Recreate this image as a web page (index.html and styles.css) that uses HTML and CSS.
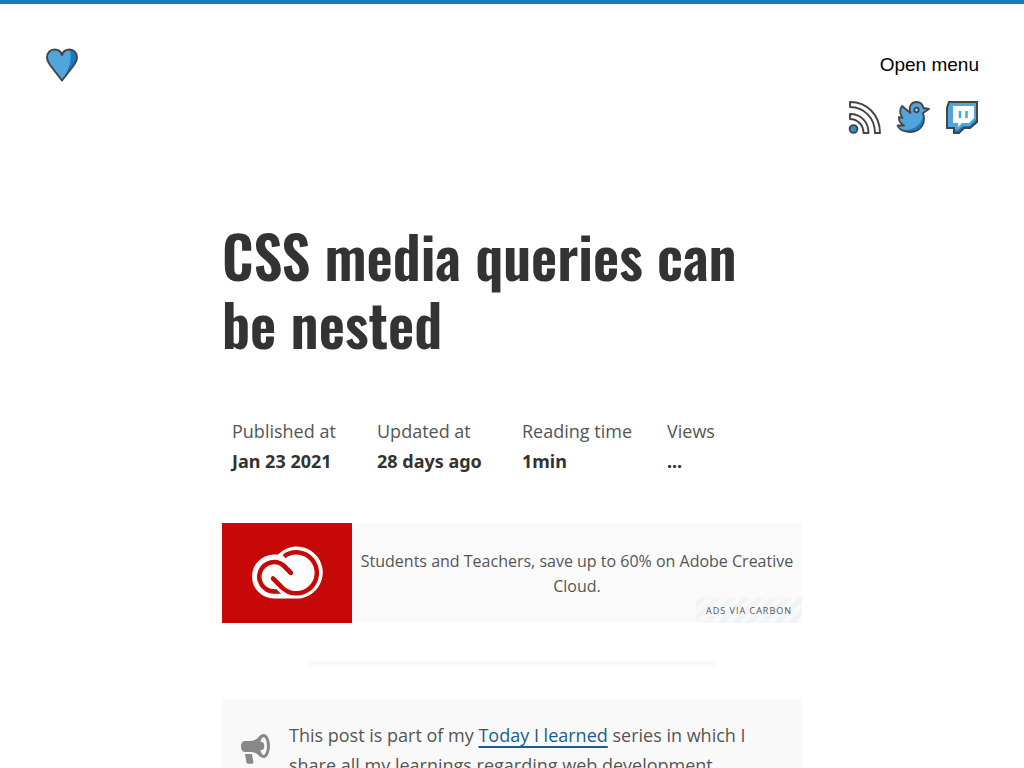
FILE: index.html
```html
<!DOCTYPE html>
<html lang="en">
<head>
<meta charset="utf-8">
<meta name="viewport" content="width=device-width, initial-scale=1">
<title>CSS media queries can be nested</title>
<link rel="stylesheet" href="styles.css">
</head>
<body>
<header class="site-header">
  <a class="home" href="#" aria-label="Home">
    <svg class="icon" viewBox="0 0 34 34" aria-hidden="true">
      <path d="M17 32.500L5 17C2.500 13.500 2 12 2 9.500C2 5 5 1.500 9.500 1.500C13 1.500 16 3.500 17 7C18 3.500 21 1.500 24.500 1.500C29 1.500 32 5 32 9.500C32 12 31.500 13.500 29 17Z" fill="#50a5dc"/>
      <path d="M17 32.500C24 22 28 10 24.500 1.500C29 1.500 32 5 32 9.500C32 12 31.500 13.500 29 17Z" fill="#1b79bd"/>
      <path d="M17 32.500L5 17C2.500 13.500 2 12 2 9.500C2 5 5 1.500 9.500 1.500C13 1.500 16 3.500 17 7C18 3.500 21 1.500 24.500 1.500C29 1.500 32 5 32 9.500C32 12 31.500 13.500 29 17Z" fill="none" stroke="#444" stroke-width="2" stroke-linejoin="round"/>
    </svg>
  </a>
  <div class="header-side">
    <button class="menu-button" type="button">Open menu</button>
    <nav class="social" aria-label="Social">
      <a href="#" aria-label="RSS feed">
        <svg class="icon" viewBox="0 0 34 34" fill="none" stroke="#444" stroke-width="1.900" stroke-linejoin="round" aria-hidden="true">
          <path d="M3 2C20 2 33 15 33 33H28C28 18 17 7 3 7Z"/>
          <path d="M3 14C14 14 21.500 22 21.500 33H16.500C16.500 25 10.500 19 3 19Z"/>
          <circle cx="6.500" cy="29" r="3.900" fill="#2f8dcb"/>
        </svg>
      </a>
      <a href="#" aria-label="Twitter">
        <svg class="icon" viewBox="0 0 34 34" aria-hidden="true">
          <path d="M6 6L14.500 13C12 6 16 2 20.500 2C25 2 26.500 4 27.500 8L33 9L27 13C30 22 26 32 14 32C7 32 3 29 1.500 25.500H8C4 23 2.500 20 3 17L6.500 18C3.500 14 3.500 9 6 6Z" fill="#50a5dc"/>
          <path d="M4 29C14 32 24 27 27 17C28 26 22 32 14 32C9 32 6 31 4 29Z" fill="#1b79bd"/>
          <path d="M6 6L14.500 13C12 6 16 2 20.500 2C25 2 26.500 4 27.500 8L33 9L27 13C30 22 26 32 14 32C7 32 3 29 1.500 25.500H8C4 23 2.500 20 3 17L6.500 18C3.500 14 3.500 9 6 6Z" fill="none" stroke="#444" stroke-width="1.800" stroke-linejoin="round"/>
          <circle cx="20.500" cy="10" r="2.300" fill="#9acbea" stroke="#444" stroke-width="1.700"/>
        </svg>
      </a>
      <a href="#" aria-label="Twitch">
        <svg class="icon" viewBox="0 0 34 34" aria-hidden="true">
          <path d="M4 2H32V22L25 28H19L14 33H9V28H2V8Z" fill="#50a5dc"/>
          <path d="M32 18V22L25 28H19L14 33H9V30H13L18 26H25Z" fill="#1b79bd"/>
          <path d="M8 6H29V18L24 23H17L13 27V23H8Z" fill="#fff"/>
          <path d="M4 2H32V22L25 28H19L14 33H9V28H2V8Z" fill="none" stroke="#444" stroke-width="2"/>
          <path d="M15 11V18M21.500 11V18" stroke="#50a5dc" stroke-width="2.500"/>
        </svg>
      </a>
    </nav>
  </div>
</header>
<main class="article">
  <h1 class="title">CSS media queries can be nested</h1>
  <dl class="meta">
    <div><dt>Published at</dt><dd>Jan 23 2021</dd></div>
    <div><dt>Updated at</dt><dd>28 days ago</dd></div>
    <div><dt>Reading time</dt><dd>1min</dd></div>
    <div><dt>Views</dt><dd>...</dd></div>
  </dl>
  <aside class="ad">
    <a class="ad-logo" href="#" aria-label="Adobe Creative Cloud">
      <svg viewBox="0 0 130 100" aria-hidden="true">
        <rect width="130" height="100" fill="#c60808"/>
        <path d="M52 75.500A22 22 0 0 1 52 31.500H56A26 26 0 1 1 74 75.500Z" fill="#fff"/>
        <g fill="none" stroke="#c60808" stroke-width="4.500">
          <path d="M52 68.500A14.700 14.700 0 1 1 62 43L69 50" stroke-linejoin="round"/>
          <path d="M62 43L69 50" stroke-linecap="round"/>
          <path d="M62 33.500A20.500 20.500 0 1 1 59.500 64L51 55.500"/>
          <path d="M51 55.500L59.500 64" stroke-linecap="round"/>
        </g>
        <path d="M51 66.200H54.500L59 70.800H51Z" fill="#c60808"/>
      </svg>
    </a>
    <a class="ad-text" href="#">Students and Teachers, save up to 60% on Adobe Creative Cloud.</a>
    <a class="ad-via" href="#">ads via Carbon</a>
  </aside>
  <hr class="divider">
  <div class="note">
    <svg class="note-icon" viewBox="0 0 30 30" aria-hidden="true">
      <path d="M5 7H10C15 7 18 4 20 1.500V23C18 20 15 18 10 18H5C2 18 1 15 1 12.500S2 7 5 7Z" fill="#888"/>
      <ellipse cx="23.500" cy="12" rx="5" ry="10.500" fill="#f9f9f9" stroke="#888" stroke-width="3"/>
      <path d="M17 8H22C25 8 25 16 22 16H17Z" fill="#888"/>
      <path d="M5 20H12L13.500 29C13.500 30 7 30 6.500 29Z" fill="#888"/>
    </svg>
    <p class="note-text">This post is part of my <a href="#">Today I learned</a> series in which I share all my learnings regarding web development.</p>
  </div>
</main>
</body>
</html>
```
FILE: styles.css
```css
* {
  box-sizing: border-box;
}

html {
  height: 100%;
  overflow: hidden;
}

body {
  height: 100%;
  margin: 0;
  overflow: hidden;
  border-top: 4px solid #1b79bd;
  background: #fff;
  color: #555;
  font-family: "Segoe UI", "Open Sans", "Noto Sans", sans-serif;
  font-size: 18px;
  line-height: 30px;
}

.site-header {
  display: flex;
  justify-content: space-between;
  align-items: flex-start;
  padding: 44px 45px 0;
}

.icon {
  display: block;
  width: 34px;
  height: 34px;
}

.header-side {
  display: flex;
  flex-direction: column;
  align-items: flex-end;
  gap: 18px;
}

.menu-button {
  padding: 0;
  border: 0;
  background: none;
  color: #000;
  font-family: "Liberation Sans", Arial, sans-serif;
  font-size: 19px;
  line-height: 34px;
}

.social {
  display: flex;
  gap: 15px;
}

.article {
  max-width: 580px;
  margin: 87px auto 0;
}

.title {
  margin: 0;
  color: #333;
  font-family: Oswald, "Liberation Sans Narrow", "Roboto Condensed", sans-serif;
  font-size: 57px;
  font-weight: 600;
  line-height: 68px;
}

.meta {
  display: grid;
  grid-template-columns: repeat(4, 1fr);
  margin: 59px 0 0;
  padding: 0;
}

.meta div {
  padding-left: 10px;
  white-space: nowrap;
}

.meta dd {
  margin: 0;
  color: #333;
  font-family: "Segoe UI", "Noto Sans", sans-serif;
  font-weight: 700;
}

.ad {
  position: relative;
  display: flex;
  margin-top: 47px;
  background: #fafafa;
}

.ad-logo,
.ad-logo svg {
  display: block;
  flex: none;
  width: 130px;
  height: 100px;
}

.ad-text {
  flex: 1;
  padding: 26px 8px 0;
  color: #555;
  font-size: 16px;
  line-height: 25px;
  text-align: center;
  text-decoration: none;
}

.ad-via {
  position: absolute;
  right: 0;
  bottom: 0;
  padding: 0 10px;
  background: repeating-linear-gradient(-45deg, #f8f9fa 0 5px, #f2f3f4 5px 10px);
  color: #555;
  font-size: 9px;
  line-height: 25px;
  letter-spacing: 1px;
  text-decoration: none;
  text-transform: uppercase;
}

.divider {
  width: 70%;
  height: 5px;
  margin: 38px auto 33px;
  border: 0;
  background: #f9f9f9;
}

.note {
  display: flex;
  gap: 19px;
  padding: 21px 30px 21px 18px;
  background: #f9f9f9;
}

.note-icon {
  flex: none;
  width: 30px;
  height: 30px;
  margin-top: 14px;
}

.note-text {
  margin: 0;
}

.note-text a {
  color: #1c5d8c;
  text-decoration-thickness: 2px;
  text-underline-offset: 4px;
}
```
